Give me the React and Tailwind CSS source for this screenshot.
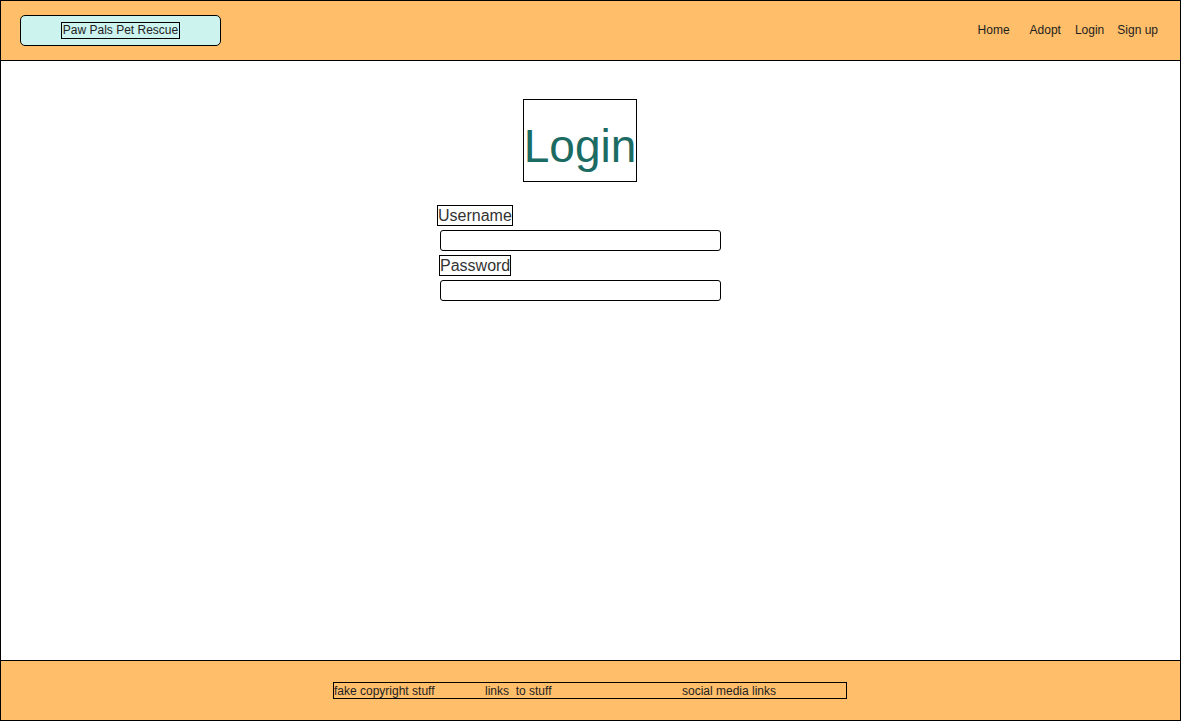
import React from "react";

// wireframe-style login page
function Header() {
  return (
    <header className="flex h-[60px] shrink-0 items-center border-b border-black bg-[#ffbe6a] pl-[19px] pr-[22px]">
      <div className="flex h-[31px] w-[201px] items-center justify-center rounded-[5px] border border-black bg-[#cdf3ef]">
        <span className="border border-black px-[1px] text-[12px] leading-[15px] text-[#222]">Paw Pals Pet Rescue</span>
      </div>
      <nav className="mb-[2px] ml-auto flex items-center text-[12px] text-[#1e1e1e]">
        <a className="mr-[20px]">Home</a>
        <a className="mr-[14px]">Adopt</a>
        <a className="mr-[13px]">Login</a>
        <a>Sign up</a>
      </nav>
    </header>
  );
}

function Field({ label, labelOffset }) {
  return (
    <div className="flex flex-col items-start">
      <span className={`border border-black text-[16px] leading-[19px] text-[#333] ${labelOffset}`}>{label}</span>
      <input className="ml-[3px] mt-[4px] h-[21px] w-[281px] rounded-[3px] border border-black bg-white outline-none" />
    </div>
  );
}

function LoginForm() {
  return (
    <main className="flex flex-1 flex-col">
      <div className="ml-[522px] mt-[38px] flex h-[83px] w-[114px] items-center justify-center border border-black pt-[11px]">
        <h1 className="text-[46px] leading-none text-[#1b6b63]">Login</h1>
      </div>
      <div className="ml-[436px] mt-[23px] flex flex-col gap-[4px]">
        <Field label="Username" labelOffset="" />
        <Field label="Password" labelOffset="ml-[2px]" />
      </div>
    </main>
  );
}

function Footer() {
  return (
    <footer className="flex h-[60px] shrink-0 items-center border-t border-black bg-[#ffbe6a]">
      <div className="ml-[332px] flex h-[17px] w-[514px] items-center border border-black text-[12px] text-[#222]">
        <span className="w-[151px]">fake copyright stuff</span>
        <span className="w-[197px]">links&nbsp; to stuff</span>
        <span>social media links</span>
      </div>
    </footer>
  );
}

export default function App() {
  return (
    <div className="flex h-[721px] w-[1181px] flex-col border border-black bg-white font-['Liberation_Sans',Arial,sans-serif]">
      <Header />
      <LoginForm />
      <Footer />
    </div>
  );
}
